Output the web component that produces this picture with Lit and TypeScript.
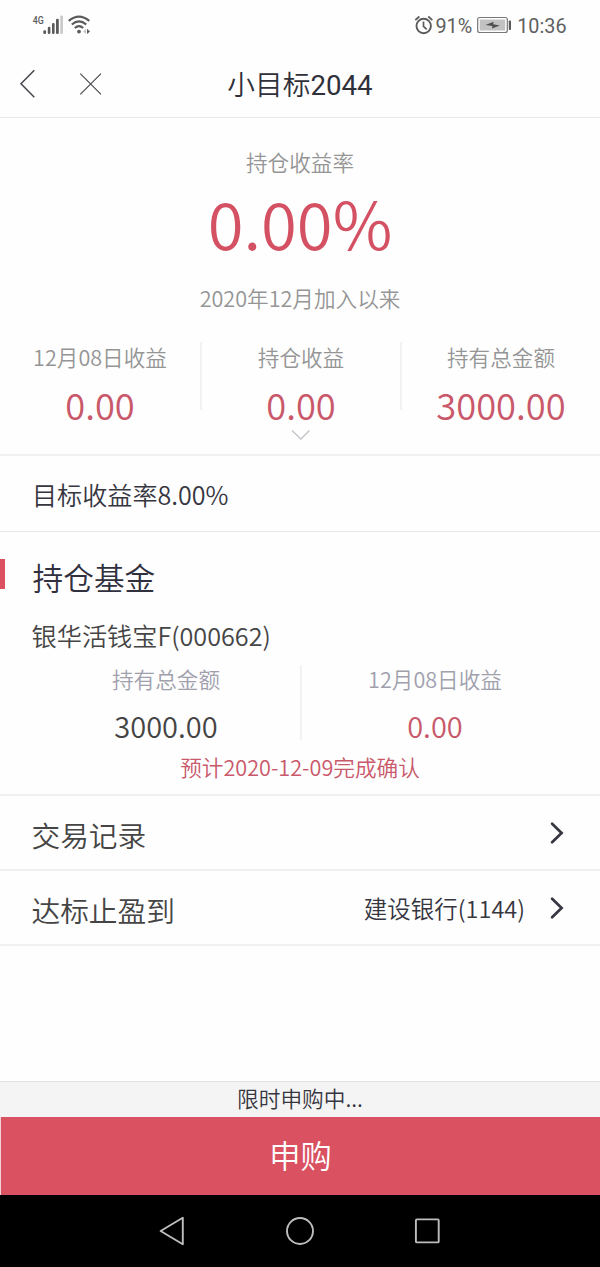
import { LitElement, html, css } from "lit";
import { customElement } from "lit/decorators.js";

@customElement("status-bar")
class StatusBar extends LitElement {
  static styles = css`
    :host { display: flex; justify-content: space-between; height: 51px; box-sizing: border-box; padding: 0 33.5px 0 32px; font-family: Roboto, sans-serif; font-weight: 400; color: #606060; font-size: 19.8px; }
    .side { display: flex; align-items: center; }
    .time { margin-left: 6px; font-size: 19.8px; line-height: 51px; padding-top: 1px; }
    .charge { line-height: 51px; padding-top: 1px; }
    .battery { margin-left: 4px; }
    .alarm { position: relative; left: -1px; }
    svg { display: block; }
    .net { font-family: "Roboto", sans-serif; font-size: 11.5px; font-weight: 500; }
  `;
  render() {
    return html`
      <div class="side">
        <svg width="60" height="51" viewBox="32 0 60 51">
          <text class="net" x="32.8" y="24" fill="#5b5b5b" textLength="11" lengthAdjust="spacingAndGlyphs">4G</text>
          <g fill="#5b5b5b">
            <rect x="43.3" y="30.3" width="2.8" height="3.7" rx="1.2" />
            <rect x="47.8" y="26.7" width="2.6" height="7.3" rx="1.2" />
            <rect x="52" y="23" width="2.6" height="11" rx="1.2" />
            <rect x="56" y="18.8" width="2.8" height="15.2" rx="1.2" />
            <rect x="60.3" y="15.5" width="2.6" height="18.5" rx="1" fill="#c9c9c9" />
          </g>
          <g fill="none" stroke="#5b5b5b" stroke-width="2.1">
            <path d="M68.7 20.9Q79 12.3 89.3 20.9" />
            <path d="M71.8 24.5Q79 18.4 86.2 24.5" />
            <path d="M74.8 28Q79 24.4 83.2 28" />
          </g>
          <circle cx="79" cy="31.6" r="1.9" fill="#5b5b5b" />
          <path d="M86 28.8L83.2 31.4L86 34Z" fill="#c4c4c4" />
          <path d="M87 28.8L90 31.4L87 34Z" fill="#5b5b5b" />
        </svg>
      </div>
      <div class="side">
        <svg class="alarm" width="22" height="51" viewBox="412.3 0 22 51" fill="none" stroke="#5b5b5b">
          <circle cx="423" cy="26" r="7.2" stroke-width="1.9" />
          <path d="M422.8 21.6V26.4L426 29.4" stroke-width="1.7" />
          <path d="M414.6 20.2L418.6 16.5M431.6 20.2L427.6 16.5" stroke-width="1.8" />
        </svg>
        <span class="charge">91%</span>
        <svg class="battery" width="35" height="51" viewBox="476 0 35 51">
          <rect x="477.7" y="17.5" width="29.6" height="15" rx="2" fill="#fff" stroke="#777" stroke-width="1.2" />
          <rect x="479.8" y="19.5" width="25.4" height="11" fill="#c2c2c2" />
          <path d="M485.5 25L493.5 21.7L493.2 24.2L499.8 25.6L492 28.6L492.4 26Z" fill="#505050" />
          <rect x="508.8" y="20.5" width="2.2" height="9.5" rx=".8" fill="#5b5b5b" />
        </svg>
        <span class="time">10:36</span>
      </div>
    `;
  }
}

@customElement("title-bar")
class TitleBar extends LitElement {
  static styles = css`
    :host { display: grid; grid-template-columns: 120px 1fr 120px; height: 67px; box-sizing: border-box; border-bottom: 1px solid #e9e9eb; }
    .title { text-align: center; font-size: 27.7px; line-height: 62px; padding-top: 1px; color: #30303a; font-family: "Noto Sans CJK SC", sans-serif; }
    .digits { font-family: Roboto, sans-serif; font-weight: 400; }
    svg { display: block; }
  `;
  render() {
    return html`
      <svg width="120" height="66" viewBox="0 51 120 66" fill="none" stroke="#45454b">
        <path d="M34.3 70.3L21 83.8L34.3 97.3" stroke-width="1.5" />
        <path d="M80.3 73.7L101 94.3M101 73.7L80.3 94.3" stroke-width="1.1" />
      </svg>
      <div class="title">小目标<span class="digits">2044</span></div>
    `;
  }
}

@customElement("menu-row")
class MenuRow extends LitElement {
  static properties = { label: {}, value: {} };
  declare label: string;
  declare value: string;
  static styles = css`
    :host { display: flex; height: 75px; box-sizing: border-box; padding: 0 35px 0 31.5px; border-bottom: 2px solid #f0f0f1; }
    .label { flex: 1; font-size: 28.7px; color: #454545; line-height: 77px; }
    .value { font-size: 23.5px; color: #363641; line-height: 75px; }
    svg { display: block; margin: 25px 0 0 24px; }
  `;
  render() {
    return html`
      <div class="label">${this.label}</div>
      <div class="value">${this.value ?? ""}</div>
      <svg width="16" height="24" viewBox="0 0 16 24" fill="none" stroke="#363641" stroke-width="2.7" stroke-linecap="round">
        <path d="M3.1 2.8L12.6 12L3.1 21.2" />
      </svg>
    `;
  }
}

@customElement("app-root")
class AppRoot extends LitElement {
  static styles = css`
    :host { display: flex; flex-direction: column; width: 600px; height: 1267px; overflow: hidden; background: #fefefe; font-family: "Noto Sans CJK SC", sans-serif; font-weight: 350; }
    .summary { height: 336px; box-sizing: border-box; display: flex; flex-direction: column; padding-top: 28px; color: #959595; font-size: 21.6px; text-align: center; }
    .caption { line-height: 32px; }
    .rate { font-size: 65.2px; line-height: 84px; color: #d45163; margin-top: 2px; }
    .since { line-height: 32px; margin-top: 18px; }
    .stats { display: grid; grid-template-columns: 1fr 1fr 1fr; grid-template-rows: 68px; margin-top: 28px; }
    .stat + .stat { border-left: 2px solid #f2f2f3; }
    .stat .caption { line-height: 30px; }
    .num { font-size: 36.3px; line-height: 44px; margin-top: 10px; color: #c9586a; }
    .more { display: block; margin: 19px auto 0; }
    .target { height: 78px; box-sizing: border-box; border-top: 2px solid #f0f0f1; border-bottom: 1px solid #e9e9eb; padding-left: 32px; font-size: 25.1px; line-height: 76px; color: #363641; }
    .fund { height: 264px; box-sizing: border-box; border-bottom: 2px solid #f0f0f1; padding-top: 27px; text-align: center; }
    .heading { display: flex; text-align: left; font-size: 30.7px; line-height: 36px; height: 36px; color: #30303f; }
    .mark { width: 5px; height: 30px; background: #dc5162; margin-right: 27.5px; }
    .name { text-align: left; padding-left: 31.5px; margin-top: 22px; font-size: 25.2px; line-height: 36px; color: #454545; }
    .pair { display: grid; grid-template-columns: 1fr 1fr; grid-template-rows: 75px; margin: 12px 0 0; padding: 0 32px; color: #a0a0ad; font-size: 21.6px; }
    .pair .caption { line-height: 28px; }
    .cell + .cell { border-left: 2px solid #f2f2f3; }
    .amount { font-size: 29px; line-height: 40px; margin-top: 12px; color: #454545; }
    .gain { color: #c9586a; }
    .notice { font-size: 21.65px; line-height: 32px; margin-top: 11px; color: #c9586a; }
    .space { flex: 1; }
    .limited { height: 36px; box-sizing: border-box; border-top: 1px solid #e2e2e2; background: #f4f4f4; text-align: center; font-size: 21.7px; line-height: 32px; color: #363641; }
    .buy { height: 78px; background: #da5161; color: #fff; text-align: center; font-size: 31.3px; line-height: 76px; border-left: 1px solid #f3d3d7; box-sizing: border-box; }
    .nav { display: block; background: #000; }
  `;
  render() {
    return html`
      <status-bar></status-bar>
      <title-bar></title-bar>
      <div class="summary">
        <div class="caption">持仓收益率</div>
        <div class="rate">0.00%</div>
        <div class="since">2020年12月加入以来</div>
        <div class="stats">
          ${[["12月08日收益", "0.00"], ["持仓收益", "0.00"], ["持有总金额", "3000.00"]].map(
            ([k, v]) => html`<div class="stat"><div class="caption">${k}</div><div class="num">${v}</div></div>`
          )}
        </div>
        <svg class="more" width="20" height="12" viewBox="0 0 20 12" fill="none" stroke="#c3c3ca" stroke-width="1.3">
          <path d="M2 1.5L10.8 10L19.5 1.5" />
        </svg>
      </div>
      <div class="target">目标收益率8.00%</div>
      <div class="fund">
        <div class="heading"><div class="mark"></div><div>持仓基金</div></div>
        <div class="name">银华活钱宝F(000662)</div>
        <div class="pair">
          <div class="cell"><div class="caption">持有总金额</div><div class="amount">3000.00</div></div>
          <div class="cell"><div class="caption">12月08日收益</div><div class="amount gain">0.00</div></div>
        </div>
        <div class="notice">预计2020-12-09完成确认</div>
      </div>
      <menu-row label="交易记录"></menu-row>
      <menu-row label="达标止盈到" value="建设银行(1144)"></menu-row>
      <div class="space"></div>
      <div class="limited">限时申购中...</div>
      <div class="buy">申购</div>
      <svg class="nav" width="600" height="72" viewBox="0 1195 600 72" fill="none" stroke="#bdbdbd" stroke-width="1.9" stroke-linejoin="round">
        <path d="M160.6 1231L182.8 1217.7V1244.3Z" />
        <circle cx="300" cy="1231" r="13" />
        <rect x="415.9" y="1219.4" width="22.8" height="23" rx="1" />
      </svg>
    `;
  }
}
